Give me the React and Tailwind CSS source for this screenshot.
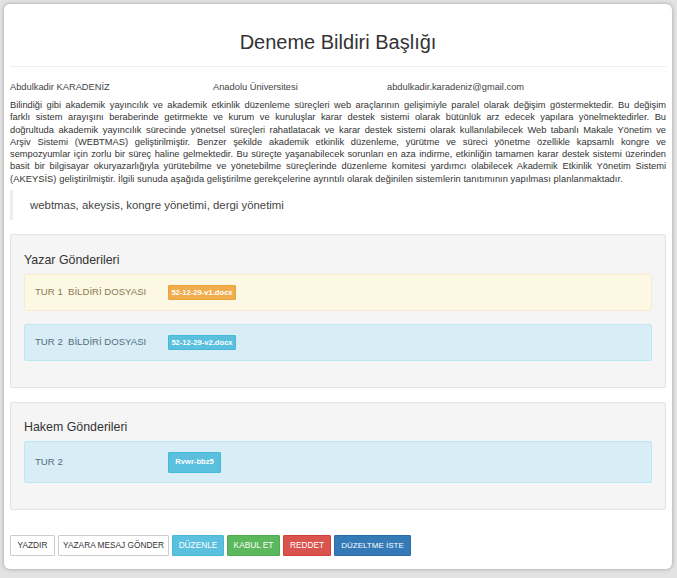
import React from "react";

// reference line breaks, kept by hand because the font widths differ a little
const abstractLines = [
  "Bilindiği gibi akademik yayıncılık ve akademik etkinlik düzenleme süreçleri web araçlarının gelişimiyle paralel olarak değişim göstermektedir. Bu değişim",
  "farklı sistem arayışını beraberinde getirmekte ve kurum ve kuruluşlar karar destek sistemi olarak bütünlük arz edecek yapılara yönelmektedirler. Bu",
  "doğrultuda akademik yayıncılık sürecinde yönetsel süreçleri rahatlatacak ve karar destek sistemi olarak kullanılabilecek Web tabanlı Makale Yönetim ve",
  "Arşiv Sistemi (WEBTMAS) geliştirilmiştir. Benzer şekilde akademik etkinlik düzenleme, yürütme ve süreci yönetme özellikle kapsamlı kongre ve",
  "sempozyumlar için zorlu bir süreç haline gelmektedir. Bu süreçte yaşanabilecek sorunları en aza indirme, etkinliğin tamamen karar destek sistemi üzerinden",
  "basit bir bilgisayar okuryazarlığıyla yürütebilme ve yönetebilme süreçlerinde düzenleme komitesi yardımcı olabilecek Akademik Etkinlik Yönetim Sistemi",
];
const abstractEnd =
  "(AKEYSİS) geliştirilmiştir. İlgili sunuda aşağıda geliştirilme gerekçelerine ayrıntılı olarak değinilen sistemlerin tanıtımının yapılması planlanmaktadır.";

const Row = ({ tone, label, file, tall }) => {
  const box =
    tone === "warning"
      ? "bg-[#fcf8e3] border-[#faebcc] text-[#8a7a55]"
      : "bg-[#d9edf7] border-[#bce8f1] text-[#4f6f80]";
  const chip =
    tone === "warning"
      ? "bg-[#f0ad4e] border-[#eea236]"
      : "bg-[#5bc0de] border-[#46b8da]";
  return (
    <div className={`flex items-center border rounded-[2px] pl-[10px] ${box} ${tall ? "h-[42px]" : "h-[37px]"}`}>
      <span className="w-[133px] text-[9.6px] whitespace-pre">{label}</span>
      <span
        className={`flex items-center justify-center border rounded-[1px] text-white font-bold whitespace-nowrap text-[7.6px] ${tall ? "w-[53px] h-[21px]" : "w-[68px] h-[15px]"} ${chip}`}
      >
        {file}
      </span>
    </div>
  );
};

const Btn = ({ className, children }) => (
  <button className={`h-[21px] border text-[8.3px] rounded-[1px] whitespace-nowrap ${className}`}>{children}</button>
);

export default function App() {
  return (
    <div className="h-[578px] bg-[#e3e3e3] pt-[4px] px-[4px] font-['Liberation_Sans',Arial,sans-serif]">
      <div className="w-[668px] h-[565px] bg-white rounded-[6px] shadow-[0_0_4px_rgba(0,0,0,0.3)] px-[6px]">
        <h1 className="h-[63px] pt-[25px] border-b border-[#eeeeee] text-center text-[20px] leading-[26px] text-[#333333]">
          Deneme Bildiri Başlığı
        </h1>

        <div className="flex mt-[14px] text-[9.3px] leading-[13px] text-[#444444]">
          <span className="w-[203px]">Abdulkadir KARADENİZ</span>
          <span className="w-[174px]">Anadolu Üniversitesi</span>
          <span>abdulkadir.karadeniz@gmail.com</span>
        </div>

        <div className="mt-[5px] text-[9.3px] leading-[12.3px] text-[#333333]">
          {abstractLines.map((line) => (
            <p key={line} className="whitespace-nowrap [text-align:justify] [text-align-last:justify]">
              {line}
            </p>
          ))}
          <p className="whitespace-nowrap tracking-[0.06px]">{abstractEnd}</p>
        </div>

        <div className="mt-[5px] h-[30px] border-l-[3px] border-[#eeeeee] pl-[17px] flex items-center text-[11.4px] text-[#444444]">
          webtmas, akeysis, kongre yönetimi, dergi yönetimi
        </div>

        <section className="mt-[14px] h-[154px] bg-[#f5f5f5] border border-[#e3e3e3] rounded-[2px] px-[13px]">
          <h2 className="pt-[17px] h-[39px] text-[12.4px] leading-[16px] text-[#333333]">Yazar Gönderileri</h2>
          <div className="flex flex-col gap-[13px]">
            <Row tone="warning" label="TUR 1  BİLDİRİ DOSYASI" file="52-12-29-v1.docx" />
            <Row tone="info" label="TUR 2  BİLDİRİ DOSYASI" file="52-12-29-v2.docx" />
          </div>
        </section>

        <section className="mt-[14px] h-[108px] bg-[#f5f5f5] border border-[#e3e3e3] rounded-[2px] px-[13px]">
          <h2 className="pt-[16px] h-[38px] text-[12.4px] leading-[16px] text-[#333333]">Hakem Gönderileri</h2>
          <Row tone="info" tall label="TUR 2" file="Rvwr-bbz5" />
        </section>

        <div className="flex gap-[3px] mt-[25px]">
          <Btn className="w-[45px] bg-white border-[#cccccc] text-[#333333]">YAZDIR</Btn>
          <Btn className="w-[111px] bg-white border-[#cccccc] text-[#333333]">YAZARA MESAJ GÖNDER</Btn>
          <Btn className="w-[52px] bg-[#5bc0de] border-[#46b8da] text-white">DÜZENLE</Btn>
          <Btn className="w-[53px] bg-[#5cb85c] border-[#4cae4c] text-white">KABUL ET</Btn>
          <Btn className="w-[48px] bg-[#d9534f] border-[#d43f3a] text-white">REDDET</Btn>
          <Btn className="w-[77px] bg-[#337ab7] border-[#2e6da4] text-white text-[8px]">DÜZELTME İSTE</Btn>
        </div>
      </div>
    </div>
  );
}
